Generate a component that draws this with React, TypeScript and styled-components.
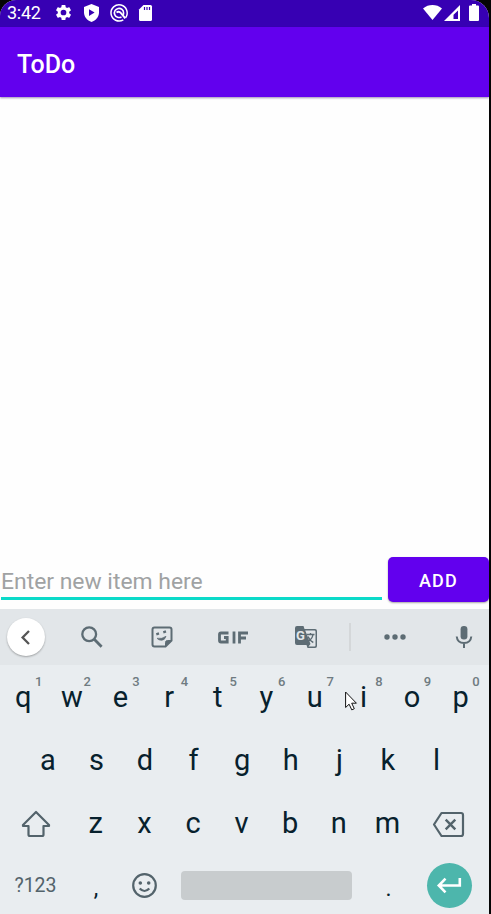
import React from "react";
import styled, { createGlobalStyle } from "styled-components";

const GlobalStyle = createGlobalStyle`
  * { box-sizing: border-box; }
  body { margin: 0; background: #000; overflow: hidden; font-family: Roboto, sans-serif; }
`;

const Backdrop = styled.div`
  width: 491px;
  height: 914px;
  overflow: hidden;
  background: #050505;
`;

const Screen = styled.main`
  display: flex;
  flex-direction: column;
  width: 489px;
  height: 914px;
  overflow: hidden;
  background: #fefefe;
  border-radius: 16px 18px 0 0;
`;

const StatusBar = styled.header`
  display: flex;
  flex: none;
  align-items: center;
  justify-content: space-between;
  height: 27px;
  padding: 0 10px 2px 7px;
  background: #3700b3;
  color: #fff;
`;

const StatusGroup = styled.div<{ $gap: number }>`
  display: flex;
  align-items: center;
  gap: ${(p) => p.$gap}px;
`;

const Clock = styled.span`
  width: 36px;
  font-size: 18px;
  line-height: 25px;
  letter-spacing: -0.3px;
`;

const Icon = styled.svg`
  display: block;
  flex: none;
  overflow: visible;
`;

const AppBar = styled.div`
  display: flex;
  flex: none;
  align-items: center;
  height: 70px;
  padding: 5px 17px 0;
  background: #6200ee;
  color: #fff;
  box-shadow: 0 1px 2px rgba(40, 0, 90, 0.45);
  font-size: 25px;
  font-weight: 500;
`;

const ItemList = styled.section`
  flex: 1;
`;

const EntryRow = styled.form`
  display: flex;
  flex: none;
  height: 53px;
  padding-top: 1px;
`;

const EntryField = styled.input`
  width: 381px;
  height: 44px;
  margin: -1px 6px 0 1px;
  padding: 9px 0 0;
  border: 0;
  border-bottom: 3px solid #0bdac9;
  outline: 0;
  background: transparent;
  font: 400 22.9px Roboto, sans-serif;
  &::placeholder { color: #a0a2a3; opacity: 1; }
`;

const AddButton = styled.button`
  width: 101px;
  height: 45px;
  padding: 1px 0 0;
  border: 0;
  border-radius: 5px;
  background: #6200ee;
  color: #fff;
  box-shadow: 0 1px 2px rgba(0, 0, 0, 0.35);
  font: 500 18px Roboto, sans-serif;
  letter-spacing: 1.2px;
`;

const Toolbar = styled.div`
  display: grid;
  flex: none;
  grid-template-columns: 56px 71px 70px 71px 76px 12px 77px 62px;
  align-items: center;
  justify-items: center;
  height: 56px;
  background: #e2e6e9;
  color: #5d6c74;
`;

const BackButton = styled.div`
  display: grid;
  place-items: center;
  width: 38px;
  height: 38px;
  margin-left: -5px;
  border-radius: 50%;
  background: #fff;
  color: #555;
  box-shadow: 0 1px 2px rgba(0, 0, 0, 0.3);
`;

const Separator = styled.div`
  width: 2px;
  height: 28px;
  background: #d4d7d9;
`;

const Keyboard = styled.section`
  display: flex;
  flex: none;
  flex-direction: column;
  height: 249px;
  overflow: hidden;
  background: #e9edf0;
`;

const KeyRow = styled.div<{ $height?: number; $indent?: number }>`
  display: flex;
  flex: none;
  height: ${(p) => p.$height ?? 63}px;
  margin-left: ${(p) => p.$indent ?? 0}px;
`;

const Key = styled.div<{ $width?: number }>`
  position: relative;
  display: flex;
  flex: none;
  align-items: center;
  justify-content: center;
  width: ${(p) => p.$width ?? 48.6}px;
  height: 100%;
  color: #07212d;
  font-size: 29px;
  line-height: 34px;
`;

const ActionKey = styled(Key)`
  color: #53636b;
`;

const IconKey = styled(ActionKey)`
  padding-top: 3px;
`;

const Hint = styled.span`
  position: absolute;
  top: 8px;
  left: 36px;
  color: #6f7b81;
  font-size: 13px;
  font-weight: 500;
  line-height: 18px;
`;

const SymbolKey = styled(ActionKey)`
  font-size: 19.5px;
  padding-top: 1px;
`;

const PunctuationKey = styled(Key)`
  padding-top: 6px;
  font-size: 23px;
`;

const SpaceBar = styled.div`
  width: 171px;
  height: 29px;
  border-radius: 4px;
  background: #c8ccce;
`;

const EnterKey = styled.div`
  display: grid;
  place-items: center;
  width: 45px;
  height: 45px;
  border-radius: 50%;
  background: #4db6ac;
`;

const Pointer = styled(Icon)`
  position: absolute;
  left: 345px;
  top: 691px;
`;

const TopKeys = "qwertyuiop".split("");
const MiddleKeys = "asdfghjkl".split("");
const BottomKeys = "zxcvbnm".split("");

const GearIcon = () => (
  <Icon width="19" height="19" viewBox="0 0 24 24" fill="#fff">
    <path d="M19.14 12.94a7.5 7.5 0 0 0 0-1.88l2.03-1.58a.5.5 0 0 0 .12-.64l-1.92-3.32a.5.5 0 0 0-.59-.22l-2.39.96a7 7 0 0 0-1.62-.94l-.36-2.54a.5.5 0 0 0-.48-.41h-3.84a.5.5 0 0 0-.47.41l-.36 2.54a7.4 7.4 0 0 0-1.62.94l-2.39-.96a.5.5 0 0 0-.59.22L2.74 8.84a.5.5 0 0 0 .12.64l2.03 1.58a7.5 7.5 0 0 0 0 1.88l-2.03 1.58a.5.5 0 0 0-.12.64l1.92 3.32c.12.22.37.29.59.22l2.39-.96c.5.38 1.03.7 1.62.94l.36 2.54c.05.24.24.41.48.41h3.84c.24 0 .44-.17.47-.41l.36-2.54a7.4 7.4 0 0 0 1.62-.94l2.39.96c.22.08.47 0 .59-.22l1.92-3.32a.5.5 0 0 0-.12-.64zM12 15.6A3.6 3.6 0 1 1 12 8.4a3.6 3.6 0 0 1 0 7.2z" />
  </Icon>
);

const ShieldIcon = () => (
  <Icon width="15" height="18" viewBox="0 0 15 18">
    <path d="M7.5 0 15 3v5.500c0 4.300-3.100 8-7.500 9.500C3.100 16.500 0 12.800 0 8.500V3z" fill="#fff" />
    <path d="M5 5.200v6.800l5.600-3.400z" fill="#3700b3" />
  </Icon>
);

const RadarIcon = () => (
  <Icon width="18" height="18" viewBox="0 0 18 18" fill="none" stroke="#fff">
    <path d="M13.300 15.800A8.100 8.100 0 1 1 15.600 13.700" strokeWidth="1.500" />
    <path d="M11.500 12.800a4.600 4.600 0 1 1 2.100-3.800c0 1-.3 1.900-.8 2.600" strokeWidth="1.600" />
    <path d="M6.500 8.500q2.700-1.700 4.500.7l4.300 5.200" strokeWidth="1.900" />
  </Icon>
);

const SdIcon = () => (
  <Icon width="13" height="16" viewBox="0 0 13 16">
    <path d="M4.500 0H11.500Q13 0 13 1.500v13q0 1.500-1.500 1.500h-10Q0 16 0 14.500v-10z" fill="#fff" />
    <path d="M5.500 2v3M8 2v3M10.500 2v3" stroke="#3700b3" strokeWidth="1.200" />
  </Icon>
);

const WifiIcon = () => (
  <Icon width="19" height="15" viewBox="0 0 19 15">
    <path d="M0 3.500C5.500-1.100 13.500-1.100 19 3.500L9.500 15z" fill="#fff" />
  </Icon>
);

const SignalIcon = () => (
  <Icon width="16" height="16" viewBox="0 0 16 16">
    <path fillRule="evenodd" d="M0 16 16 0v16zM9.500 14H14V5.500L9.500 9.800z" fill="#fff" />
  </Icon>
);

const BatteryIcon = () => (
  <Icon width="10" height="17" viewBox="0 0 10 17">
    <path d="M3 0h4v1.500h2q1 0 1 1V16q0 1-1 1H1q-1 0-1-1V2.500q0-1 1-1h2z" fill="#fff" />
  </Icon>
);

const BackIcon = () => (
  <Icon width="9" height="15" viewBox="0 0 9 15" fill="none" stroke="currentColor" strokeWidth="2.300">
    <path d="M8 1 1.600 7.500 8 14" />
  </Icon>
);

const SearchIcon = () => (
  <Icon width="22" height="22" viewBox="0 0 22 22" fill="none" stroke="currentColor">
    <circle cx="8.200" cy="8.200" r="6.900" strokeWidth="2.300" />
    <path d="m13 13 7.600 7.700" strokeWidth="2.800" />
  </Icon>
);

const StickerIcon = () => (
  <Icon width="22" height="22" viewBox="0 0 22 22" fill="none" stroke="currentColor" strokeWidth="2">
    <path d="M3.500 1.500h15q2 0 2 2v11l-6 6h-11q-2 0-2-2v-15q0-2 2-2z" />
    <path d="M14.500 20.500v-4q0-2 2-2h4z" fill="currentColor" strokeWidth="1" />
    <path d="m5.300 8.300 2.700-.9M12.300 6.300l2.700-.9" strokeWidth="2.300" />
    <path d="M6 12.300q4.700 1 9-2-1.200 4-4.500 4-3 0-4.500-2z" fill="currentColor" stroke="currentColor" strokeWidth=".7" />
  </Icon>
);

const GifIcon = () => (
  <Icon width="30" height="13" viewBox="0 0 30 13" fill="none" stroke="currentColor" strokeWidth="2.800">
    <path d="M10.500 2H3q-1.500 0-1.500 1.500v6Q1.500 11 3 11h6.200V6.500H6M16 .600v11.800M21.500 12.400V2H30M21.500 7H28" />
  </Icon>
);

const GLetter = styled.text`
  font: 700 13px Roboto, sans-serif;
`;

const TranslateIcon = () => (
  <Icon width="22" height="22" viewBox="0 0 22 22">
    <path d="M2 0h6.500l1 3H20q2 0 2 2v15q0 2-2 2h-7.500l-1-3H2q-2 0-2-2V2q0-2 2-2z" fill="currentColor" />
    <path d="M10.200 4.500H19.500q1 0 1 1v14q0 1-1 1h-6l2-2.500z" fill="#e2e6e9" />
    <GLetter x="1" y="14" fill="#e2e6e9">G</GLetter>
    <path d="M11.500 8.500h8M15.500 7v2M18 8.500q-.8 4.700-5 7M13 10.500q2 4.500 5.300 6" fill="none" stroke="currentColor" strokeWidth="1.400" />
  </Icon>
);

const MoreIcon = () => (
  <Icon width="22" height="6" viewBox="0 0 22 6" fill="currentColor">
    <circle cx="3" cy="3" r="2.700" />
    <circle cx="11" cy="3" r="2.700" />
    <circle cx="19" cy="3" r="2.700" />
  </Icon>
);

const MicIcon = () => (
  <Icon width="16" height="22" viewBox="0 0 16 22" fill="none" stroke="currentColor" strokeWidth="2">
    <rect x="4.600" y="0" width="6.800" height="13.500" rx="3.200" fill="currentColor" stroke="none" />
    <path d="M.7 10.500q.7 6.500 7.300 6.500t7.300-6.500M8 17v5" />
  </Icon>
);

const ShiftIcon = () => (
  <Icon width="28" height="26" viewBox="0 0 28 26" fill="none" stroke="currentColor" strokeWidth="2.200" strokeLinejoin="round">
    <path d="M14 1 27 14v1h-5.500v8.500q0 1.500-1.500 1.500H8q-1.500 0-1.500-1.500V15H1v-1z" />
  </Icon>
);

const DeleteIcon = () => (
  <Icon width="31" height="25" viewBox="0 0 31 25" fill="none" stroke="currentColor" strokeWidth="2.200" strokeLinejoin="round">
    <path d="M8.500 1H28q2 0 2 2v19q0 2-2 2H8.500L1 12.500z" />
    <path d="m12.700 7.700 9.600 9.600m0-9.600-9.600 9.600" strokeWidth="2.400" />
  </Icon>
);

const SmileIcon = () => (
  <Icon width="25" height="25" viewBox="0 0 25 25" fill="none" stroke="currentColor" strokeWidth="2.200">
    <circle cx="12.500" cy="12.500" r="11.300" />
    <circle cx="8.300" cy="10" r="1.800" fill="currentColor" stroke="none" />
    <circle cx="16.700" cy="10" r="1.800" fill="currentColor" stroke="none" />
    <path d="M7.700 15.500q4.800 5 9.600 0" />
  </Icon>
);

const EnterIcon = () => (
  <Icon width="24" height="15" viewBox="0 0 24 15" fill="none" stroke="#fff" strokeWidth="2.600">
    <path d="M22.800 0v7.500H2M8.500.700 1.800 7.500l6.700 6.800" />
  </Icon>
);

export default function App() {
  return (
    <Backdrop>
      <GlobalStyle />
      <Screen>
        <StatusBar>
          <StatusGroup $gap={11}>
            <Clock>3:42</Clock>
            <StatusGroup $gap={11}>
              <GearIcon />
              <ShieldIcon />
              <RadarIcon />
              <SdIcon />
            </StatusGroup>
          </StatusGroup>
          <StatusGroup $gap={2}>
            <WifiIcon />
            <StatusGroup $gap={9}>
              <SignalIcon />
              <BatteryIcon />
            </StatusGroup>
          </StatusGroup>
        </StatusBar>
        <AppBar>ToDo</AppBar>
        <ItemList />
        <EntryRow>
          <EntryField placeholder="Enter new item here" />
          <AddButton type="button">ADD</AddButton>
        </EntryRow>
        <Toolbar>
          <BackButton><BackIcon /></BackButton>
          <SearchIcon />
          <StickerIcon />
          <GifIcon />
          <TranslateIcon />
          <Separator />
          <MoreIcon />
          <MicIcon />
        </Toolbar>
        <Keyboard>
          <KeyRow $height={63} $indent={-1}>
            {TopKeys.map((letter, i) => (
              <Key key={letter}>{letter}<Hint>{(i + 1) % 10}</Hint></Key>
            ))}
          </KeyRow>
          <KeyRow $indent={23.5}>
            {MiddleKeys.map((letter) => <Key key={letter}>{letter}</Key>)}
          </KeyRow>
          <KeyRow>
            <IconKey $width={71.5}><ShiftIcon /></IconKey>
            {BottomKeys.map((letter) => <Key key={letter}>{letter}</Key>)}
            <IconKey $width={74}><DeleteIcon /></IconKey>
          </KeyRow>
          <KeyRow>
            <SymbolKey $width={71}>?123</SymbolKey>
            <PunctuationKey $width={50}>,</PunctuationKey>
            <ActionKey $width={47}><SmileIcon /></ActionKey>
            <Key $width={196}><SpaceBar /></Key>
            <PunctuationKey $width={49}>.</PunctuationKey>
            <Key $width={72}><EnterKey><EnterIcon /></EnterKey></Key>
          </KeyRow>
        </Keyboard>
      </Screen>
      <Pointer width="12" height="20" viewBox="0 0 12 20">
        <path d="M.6 1v15.500l3.500-3.300 2.700 5.700 2.500-1.200-2.600-5.500h4.700z" fill="#fff" stroke="#111" strokeWidth="1" />
      </Pointer>
    </Backdrop>
  );
}
